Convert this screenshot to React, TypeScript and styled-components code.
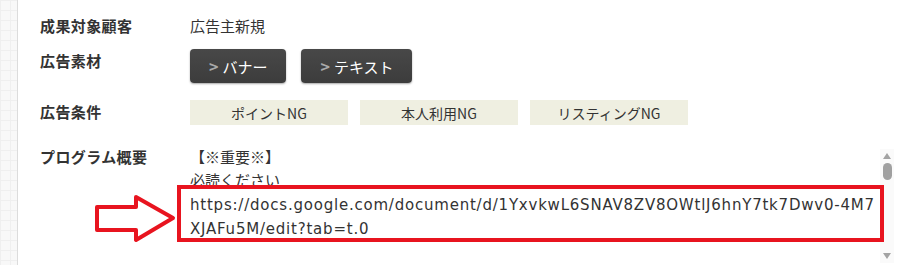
import React from "react";
import styled, { createGlobalStyle } from "styled-components";

const GlobalStyle = createGlobalStyle`
  html, body { margin: 0; padding: 0; background: #fff; }
  body {
    font-family: "Noto Sans CJK JP", "Noto Sans", sans-serif;
    color: #333;
    width: 918px;
    height: 265px;
    overflow: hidden;
  }
`;

const Page = styled.div`
  display: flex;
  height: 265px;
`;

const SideStrip = styled.div`
  width: 17px;
  flex-shrink: 0;
  background-color: #f8f8f8;
  background-image:
    linear-gradient(#efefef 1px, transparent 1px),
    linear-gradient(90deg, #efefef 1px, transparent 1px);
  background-size: 10px 10px;
  border-right: 1px solid #dcdcdc;
`;

const Table = styled.div`
  flex: 1;
  display: grid;
  grid-template-columns: 150px 1fr;
  grid-auto-rows: min-content;
  padding: 14px 0 0 22px;
`;

const Label = styled.div<{ $pt?: number }>`
  font-size: 15px;
  font-weight: bold;
  color: #333;
  line-height: 24px;
  letter-spacing: 0.4px;
  padding-top: ${(p) => p.$pt ?? 0}px;
`;

const Value = styled.div<{ $pb?: number }>`
  font-size: 15px;
  line-height: 24px;
  padding-bottom: ${(p) => p.$pb ?? 0}px;
`;

const ButtonRow = styled.div`
  display: flex;
  gap: 15px;
  padding-bottom: 17px;
`;

const DarkButton = styled.button`
  display: flex;
  align-items: center;
  justify-content: center;
  gap: 4px;
  height: 34px;
  padding: 0 19px;
  border: none;
  border-radius: 4px;
  background: linear-gradient(#484848, #3c3c3c);
  box-shadow: 0 1px 2px rgba(0, 0, 0, 0.35);
  color: #fff;
  font-family: "Noto Sans CJK JP", sans-serif;
  font-size: 15px;
`;

const Chevron = styled.span`
  color: #aaa;
  font-size: 16px;
  font-weight: bold;
`;

const TagRow = styled.div`
  display: flex;
  gap: 12px;
  padding-bottom: 18px;
`;

const Tag = styled.div`
  width: 158px;
  height: 25px;
  display: flex;
  align-items: center;
  justify-content: center;
  background: #efefe1;
  font-size: 14px;
  color: #333;
`;

const Overview = styled.div`
  position: relative;
  display: flex;
  margin-left: -150px;
  padding-left: 150px;
  height: 120px;
`;

const OverviewText = styled.div`
  flex: 1;
  font-size: 15px;
  line-height: 23px;
  padding-top: 2px;
`;

const Url = styled.div`
  font-family: "DejaVu Sans", Verdana, sans-serif;
  font-size: 15px;
  line-height: 24px;
  letter-spacing: 0.78px;
  margin-top: 2px;
  width: 690px;
  word-break: break-all;
`;

const Scrollbar = styled.div`
  width: 14px;
  margin-right: 25px;
  margin-top: 6px;
  background: #fafafa;
  display: flex;
  flex-direction: column;
  align-items: center;
`;

const ArrowUp = styled.div`
  margin-top: 4px;
  width: 0;
  height: 0;
  border-left: 4px solid transparent;
  border-right: 4px solid transparent;
  border-bottom: 6px solid #a3a3a3;
`;

const Thumb = styled.div`
  margin-top: 4px;
  width: 9px;
  height: 17px;
  border-radius: 5px;
  background: #a0a0a0;
`;

const ArrowDown = styled.div`
  margin-top: auto;
  margin-bottom: 4px;
  width: 0;
  height: 0;
  border-left: 4px solid transparent;
  border-right: 4px solid transparent;
  border-top: 6px solid #a3a3a3;
`;

const Highlight = styled.div`
  position: absolute;
  left: 137px;
  top: 42px;
  width: 699px;
  height: 49px;
  border: 4px solid #e8141f;
  pointer-events: none;
`;

const ArrowMark = styled.svg`
  position: absolute;
  left: 54px;
  top: 51px;
`;

export default function App() {
  return (
    <>
      <GlobalStyle />
      <Page>
        <SideStrip />
        <Table>
          <Label>成果対象顧客</Label>
          <Value $pb={11}>広告主新規</Value>

          <Label>広告素材</Label>
          <ButtonRow>
            <DarkButton>
              <Chevron>&gt;</Chevron>バナー
            </DarkButton>
            <DarkButton>
              <Chevron>&gt;</Chevron>テキスト
            </DarkButton>
          </ButtonRow>

          <Label>広告条件</Label>
          <TagRow>
            <Tag>ポイントNG</Tag>
            <Tag>本人利用NG</Tag>
            <Tag>リスティングNG</Tag>
          </TagRow>

          <Label $pt={2}>プログラム概要</Label>
          <Overview>
            <OverviewText>
              <div>【※重要※】</div>
              <div>必読ください</div>
              <Url>https://docs.google.com/document/d/1YxvkwL6SNAV8ZV8OWtlJ6hnY7tk7Dwv0-4M7XJAFu5M/edit?tab=t.0</Url>
            </OverviewText>
            <Scrollbar>
              <ArrowUp />
              <Thumb />
              <ArrowDown />
            </Scrollbar>
            <Highlight />
            <ArrowMark width="84" height="50" viewBox="0 0 84 50">
              <polygon
                points="3,13 42,13 42,3 79,24 42,46 42,36 3,36"
                fill="none"
                stroke="#e8141f"
                strokeWidth="4"
                strokeLinejoin="round"
              />
            </ArrowMark>
          </Overview>
        </Table>
      </Page>
    </>
  );
}
